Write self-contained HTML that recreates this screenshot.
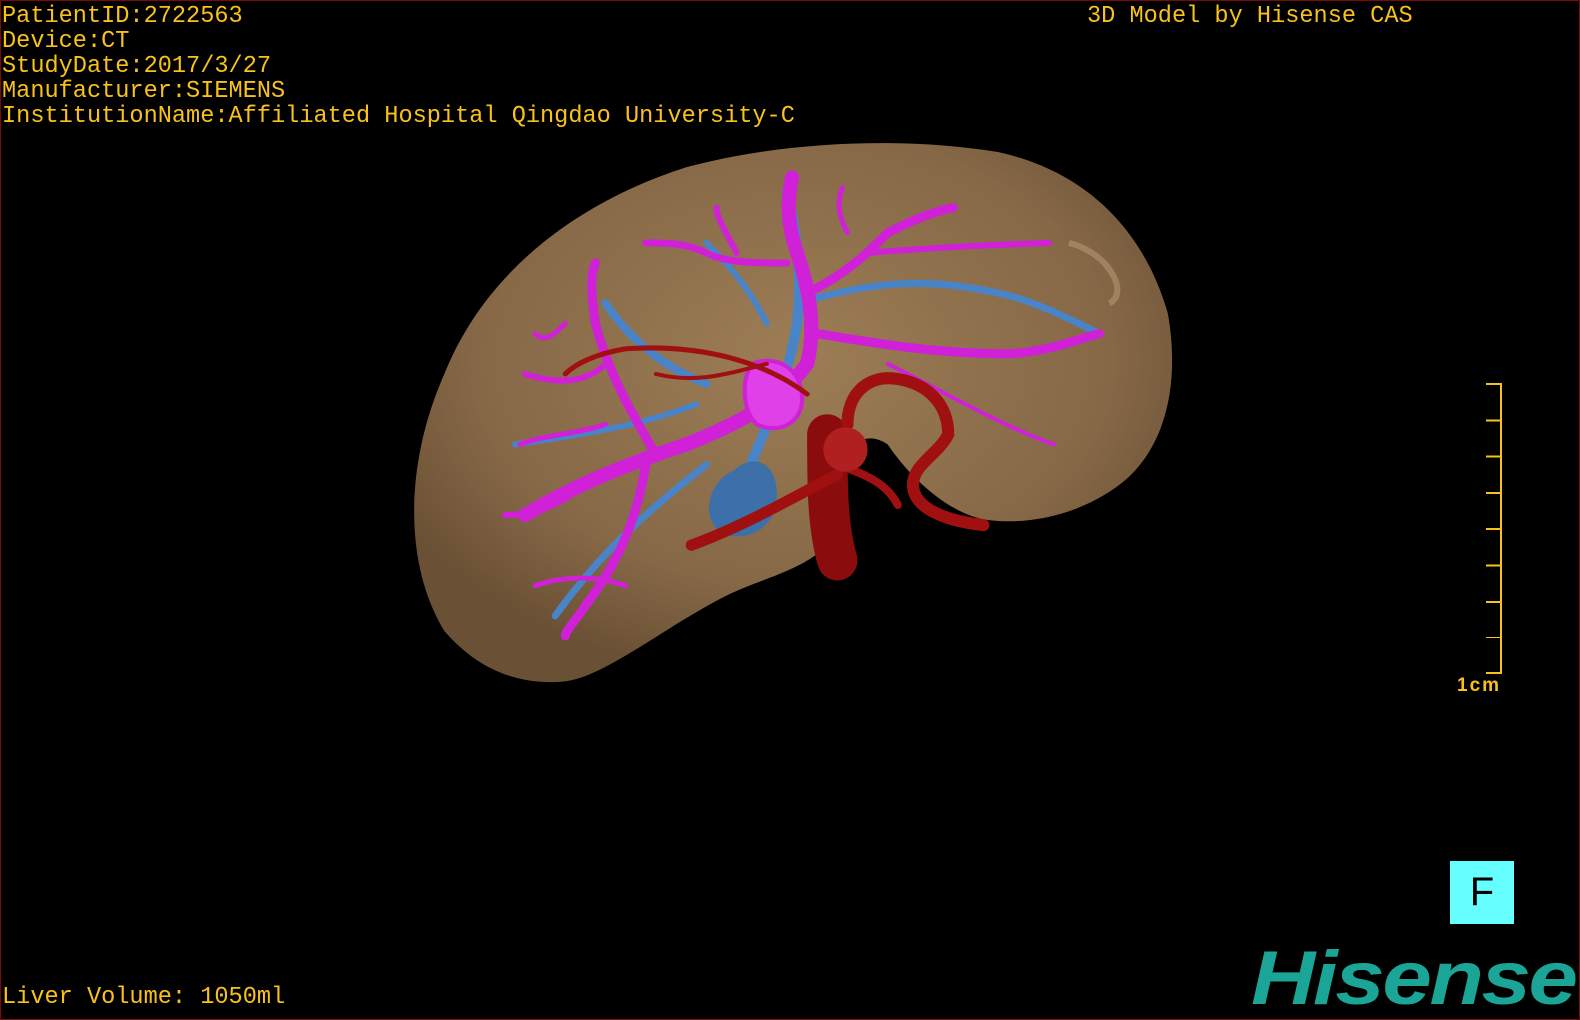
<!DOCTYPE html>
<html><head><meta charset="utf-8"><style>
html,body{margin:0;padding:0;background:#000;}
#w{position:relative;width:1580px;height:1020px;background:#000;overflow:hidden;box-sizing:border-box;border:1px solid #7a0a0a;}
.t{position:absolute;font-family:"Liberation Mono",monospace;font-size:23.6px;color:#f8c21a;line-height:25px;white-space:pre;}
svg{position:absolute;left:0;top:0;}
</style></head><body><div id="w">
<svg width="1580" height="1020" viewBox="0 0 1568 1012" preserveAspectRatio="none">
<defs>
<radialGradient id="lv" cx="0.5" cy="0.4" r="0.6">
<stop offset="0" stop-color="#9c7d55"/><stop offset="0.7" stop-color="#866847"/><stop offset="1" stop-color="#6a5034"/>
</radialGradient>
</defs>
<path d="M440,625 C400,560 400,460 440,370 C480,270 570,200 680,165 C780,138 900,135 990,150 C1080,170 1135,230 1158,310 C1172,390 1150,450 1110,480 C1070,510 1020,520 980,515 C940,510 900,470 880,440 C850,420 830,450 830,520 C820,560 760,570 720,590 C660,620 600,670 560,675 C510,680 470,660 440,625 Z" fill="url(#lv)"/>
<path d="M1060,240 C1100,250 1120,290 1100,300" fill="none" stroke="#b89670" stroke-width="6" opacity="0.6"/>
<g fill="none" stroke-linecap="round">
<g stroke="#4a84c8">
<path d="M740,470 C760,420 780,380 790,320 C795,270 790,230 780,190" stroke-width="10"/>
<path d="M790,300 C860,280 920,270 1010,295 C1040,305 1070,320 1090,330" stroke-width="7"/>
<path d="M700,380 C650,360 620,330 600,300" stroke-width="8"/>
<path d="M690,400 C640,420 580,430 510,440" stroke-width="6"/>
<path d="M700,460 C650,500 600,540 550,610" stroke-width="7"/>
<path d="M760,320 C740,280 720,260 700,240" stroke-width="6"/>
</g>
<path d="M730,470 C745,455 765,460 765,490 C765,520 740,530 720,525 C700,515 705,480 730,470 Z" fill="#3d6fa8" stroke="#3d6fa8" stroke-width="10"/>
<g stroke="#d020d8">
<path d="M520,510 C570,480 620,460 680,440 C730,420 770,400 800,360 C810,320 800,280 790,250 C780,220 780,200 785,175" stroke-width="14"/>
<path d="M800,290 C840,270 860,250 880,230 C900,220 920,210 945,205" stroke-width="9"/>
<path d="M810,330 C870,340 930,350 1000,350 C1040,348 1070,335 1090,330" stroke-width="9"/>
<path d="M860,250 C920,245 980,242 1040,240" stroke-width="6"/>
<path d="M650,450 C620,400 600,360 590,320 C585,290 585,270 590,260" stroke-width="9"/>
<path d="M640,460 C630,520 610,560 580,600 C570,615 560,625 560,630" stroke-width="9"/>
<path d="M780,260 C750,260 720,260 700,250 C680,240 660,240 640,240" stroke-width="7"/>
<path d="M730,250 C720,230 710,215 710,205" stroke-width="6"/>
<path d="M600,360 C580,380 550,380 520,370" stroke-width="6"/>
<path d="M590,470 C560,500 530,510 500,510" stroke-width="6"/>
<path d="M600,420 C570,430 540,430 515,440" stroke-width="5"/>
<path d="M880,360 C940,390 990,420 1045,440" stroke-width="4"/>
<path d="M840,230 C830,210 830,200 835,185" stroke-width="5"/>
<path d="M620,580 C590,570 560,570 530,580" stroke-width="5"/>
<path d="M560,320 C550,330 540,340 530,330" stroke-width="5"/>
</g>
<path d="M745,360 C770,350 795,365 795,395 C795,420 770,430 750,420 C735,405 735,375 745,360 Z" fill="#e040e8" stroke="#d020d8" stroke-width="4"/>
<g stroke="#a01010">
<path d="M820,430 C820,480 820,520 830,555" stroke-width="40" stroke="#8a0c0c"/>
<path d="M685,540 C740,520 790,490 830,470" stroke-width="11"/>
<path d="M840,420 C840,390 860,370 890,375 C920,380 940,400 940,430 C930,450 905,460 905,480 C905,500 930,515 975,520" stroke-width="12"/>
<path d="M830,460 C860,470 880,480 890,500" stroke-width="8"/>
<path d="M800,390 C760,360 700,340 620,345 C590,350 570,360 560,370" stroke-width="5"/>
<path d="M760,360 C720,370 690,380 650,370" stroke-width="4"/>
</g>
<circle cx="838" cy="445" r="22" fill="#b02020"/>
</g>
</svg>
<div class="t" style="left:1px;top:3px">PatientID:2722563
Device:CT
StudyDate:2017/3/27
Manufacturer:SIEMENS
InstitutionName:Affiliated Hospital Qingdao University-C</div>
<div class="t" style="left:1086px;top:3px">3D Model by Hisense CAS</div>
<div class="t" style="left:1px;top:984px">Liver Volume: 1050ml</div>
<div style="position:absolute;left:1499px;top:382px;width:2px;height:291px;background:#f8c21a"></div>
<div style="position:absolute;left:1485px;top:382px;width:15px;height:255px;background:repeating-linear-gradient(#f8c21a 0 2px,transparent 2px 36.3px)"></div>
<div style="position:absolute;left:1485px;top:671px;width:15px;height:2px;background:#f8c21a"></div>
<div style="position:absolute;left:1456px;top:674px;font:bold 19px 'Liberation Sans',sans-serif;color:#f8c21a;letter-spacing:2px">1cm</div>
<div style="position:absolute;left:1449px;top:860px;width:64px;height:63px;background:#66ffff;color:#000;font:40px 'Liberation Sans',sans-serif;text-align:center;line-height:63px">F</div>
<div style="position:absolute;left:1250px;top:934px;font:italic bold 76px 'Liberation Sans',sans-serif;color:#1aa596;letter-spacing:-2px;transform:scaleX(1.17);transform-origin:left">Hisense</div>
</div></body></html>
